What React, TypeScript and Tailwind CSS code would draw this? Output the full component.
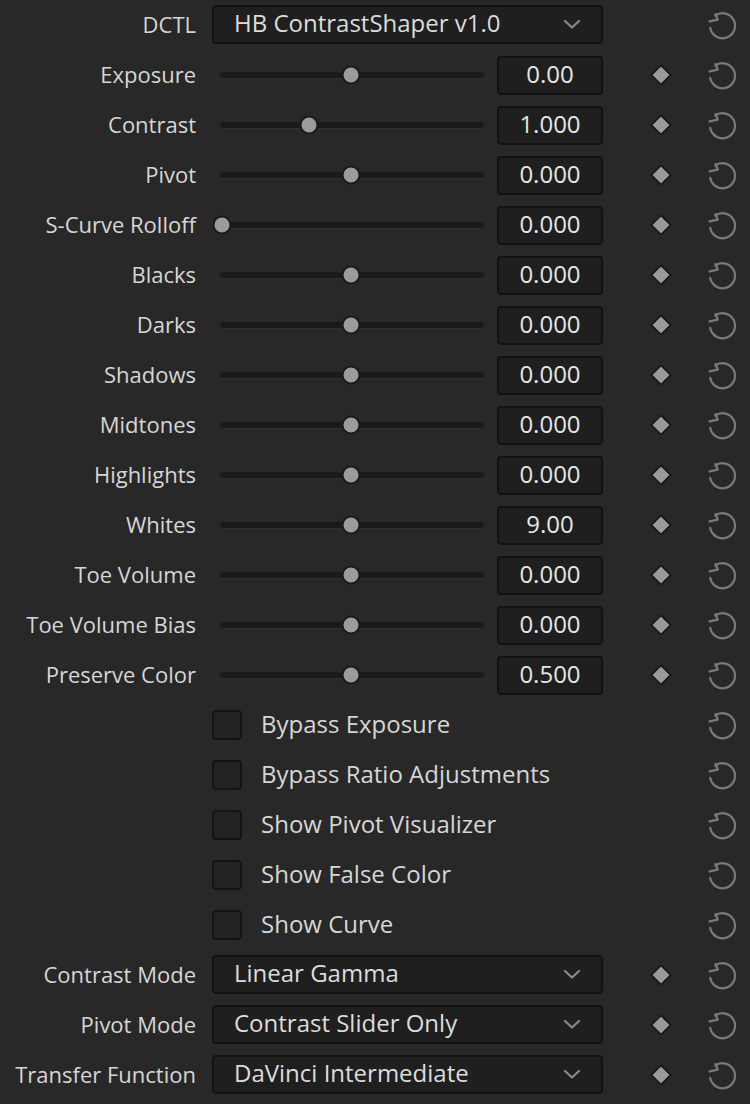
import React from "react";

type Row =
  | { kind: "select"; label: string; value: string; key?: boolean }
  | { kind: "slider"; label: string; value: string; knob: number }
  | { kind: "check"; label: string };

const ROWS: Row[] = [
  { kind: "select", label: "DCTL", value: "HB ContrastShaper v1.0" },
  { kind: "slider", label: "Exposure", value: "0.00", knob: 131 },
  { kind: "slider", label: "Contrast", value: "1.000", knob: 89 },
  { kind: "slider", label: "Pivot", value: "0.000", knob: 131 },
  { kind: "slider", label: "S-Curve Rolloff", value: "0.000", knob: 2 },
  { kind: "slider", label: "Blacks", value: "0.000", knob: 131 },
  { kind: "slider", label: "Darks", value: "0.000", knob: 131 },
  { kind: "slider", label: "Shadows", value: "0.000", knob: 131 },
  { kind: "slider", label: "Midtones", value: "0.000", knob: 131 },
  { kind: "slider", label: "Highlights", value: "0.000", knob: 131 },
  { kind: "slider", label: "Whites", value: "9.00", knob: 131 },
  { kind: "slider", label: "Toe Volume", value: "0.000", knob: 131 },
  { kind: "slider", label: "Toe Volume Bias", value: "0.000", knob: 131 },
  { kind: "slider", label: "Preserve Color", value: "0.500", knob: 131 },
  { kind: "check", label: "Bypass Exposure" },
  { kind: "check", label: "Bypass Ratio Adjustments" },
  { kind: "check", label: "Show Pivot Visualizer" },
  { kind: "check", label: "Show False Color" },
  { kind: "check", label: "Show Curve" },
  { kind: "select", label: "Contrast Mode", value: "Linear Gamma", key: true },
  { kind: "select", label: "Pivot Mode", value: "Contrast Slider Only", key: true },
  { kind: "select", label: "Transfer Function", value: "DaVinci Intermediate", key: true },
];

function ResetIcon() {
  return (
    <svg width="32" height="32" viewBox="0 0 32 32" fill="none">
      <path
        d="M9.2 6.6 A12.5 12.5 0 1 1 4.2 18.8"
        stroke="#7a7a7a"
        strokeWidth="2.2"
        strokeLinecap="round"
        fill="none"
      />
      <path
        d="M3.6 12.4 L11.8 10.6 L9.6 5"
        stroke="#7a7a7a"
        strokeWidth="2.2"
        strokeLinecap="round"
        strokeLinejoin="round"
        fill="none"
      />
    </svg>
  );
}

function Keyframe() {
  return (
    <svg width="22" height="22" viewBox="0 0 22 22">
      <path d="M11 1.5 L20.5 11 L11 20.5 L1.5 11 Z" fill="#9a9a9a" stroke="#141414" strokeWidth="1.5" strokeLinejoin="round" />
    </svg>
  );
}

function Chevron() {
  return (
    <svg width="18" height="12" viewBox="0 0 18 12" fill="none">
      <path d="M2 3 L9 9.5 L16 3" stroke="#8a8a8a" strokeWidth="2.2" strokeLinecap="round" strokeLinejoin="round" />
    </svg>
  );
}

export default function App() {
  return (
    <div
      className="w-[750px] min-h-[1104px] bg-[#282828] text-[#d6d6d6]"
      style={{ fontFamily: '"Open Sans", "Noto Sans", sans-serif' }}
    >
      {ROWS.map((row, i) => (
        <div key={i} className="h-[50px] flex items-center">
          <div className="w-[196px] shrink-0 text-right text-[22px] leading-none whitespace-nowrap pb-[2px]">
            {row.kind !== "check" ? row.label : ""}
          </div>

          <div className="ml-[16px] w-[391px] shrink-0 flex items-center">
            {row.kind === "select" && (
              <div className="w-full h-[39px] -mt-[2px] rounded-[4px] bg-[#1f1f1f] border-2 border-[#121212] flex items-center pl-[20px] pr-[20px] justify-between">
                <span className="text-[24px] text-[#dcdcdc] leading-none whitespace-nowrap pb-[2px]">{row.value}</span>
                <Chevron />
              </div>
            )}
            {row.kind === "slider" && (
              <>
                <div className="relative ml-[8px] w-[264px] h-[6px] rounded-full bg-[#1a1a1a] shadow-[0_1px_0_#303030]">
                  <div
                    className="absolute top-1/2 -translate-y-1/2 -translate-x-1/2 w-[19px] h-[19px] rounded-full bg-[#9b9b9b] border-2 border-[#1a1a1a]"
                    style={{ left: row.knob }}
                  />
                </div>
                <div className="ml-[13px] w-[106px] h-[39px] rounded-[4px] bg-[#1f1f1f] border-2 border-[#121212] flex items-center justify-center">
                  <span className="text-[24px] text-[#e6e6e6] leading-none pb-[2px]">{row.value}</span>
                </div>
              </>
            )}
            {row.kind === "check" && (
              <>
                <div className="w-[30px] h-[30px] rounded-[4px] bg-[#222222] border-2 border-[#141414]" />
                <span className="ml-[19px] text-[24px] text-[#d6d6d6] leading-none whitespace-nowrap pb-[2px]">{row.label}</span>
              </>
            )}
          </div>

          <div className="ml-[47px] w-[22px] shrink-0 flex items-center justify-center">
            {(row.kind === "slider" || (row.kind === "select" && row.key)) && <Keyframe />}
          </div>

          <div className="ml-[34px] w-[32px] shrink-0 flex items-center justify-center">
            <ResetIcon />
          </div>
        </div>
      ))}
    </div>
  );
}
